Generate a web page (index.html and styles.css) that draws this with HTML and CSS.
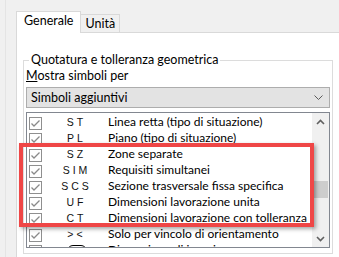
FILE: index.html
```html
<!DOCTYPE html>
<html lang="it">
<head>
<meta charset="utf-8">
<link rel="stylesheet" href="styles.css">
</head>
<body>
<div class="frame">
  <div class="tabs">
    <div class="tab active">Generale</div>
    <div class="tab">Unità</div>
  </div>
  <div class="panel">
    <fieldset class="group">
      <legend>Quotatura e tolleranza geometrica</legend>
      <div class="label"><span class="ul">M</span>ostra simboli per</div>
      <div class="select">
        <span>Simboli aggiuntivi</span>
        <svg class="chev" width="9" height="5" viewBox="0 0 9 5"><polyline points="0.5,0.5 4.5,4.5 8.5,0.5" fill="none" stroke="#5a5a5a" stroke-width="1"/></svg>
      </div>
      <div class="list">
        <div class="rows">
          <div class="row"><span class="cb"><svg width="11" height="11" viewBox="0 0 11 11"><polyline points="1.5,5.5 4,8 9.5,2.5" fill="none" stroke="#8a8a8a" stroke-width="1.3"/></svg></span><span class="sym">ST</span><span class="desc">Linea retta (tipo di situazione)</span></div>
          <div class="row"><span class="cb"><svg width="11" height="11" viewBox="0 0 11 11"><polyline points="1.5,5.5 4,8 9.5,2.5" fill="none" stroke="#8a8a8a" stroke-width="1.3"/></svg></span><span class="sym">PL</span><span class="desc">Piano (tipo di situazione)</span></div>
          <div class="row"><span class="cb"><svg width="11" height="11" viewBox="0 0 11 11"><polyline points="1.5,5.5 4,8 9.5,2.5" fill="none" stroke="#8a8a8a" stroke-width="1.3"/></svg></span><span class="sym">SZ</span><span class="desc">Zone separate</span></div>
          <div class="row"><span class="cb"><svg width="11" height="11" viewBox="0 0 11 11"><polyline points="1.5,5.5 4,8 9.5,2.5" fill="none" stroke="#8a8a8a" stroke-width="1.3"/></svg></span><span class="sym">SIM</span><span class="desc">Requisiti simultanei</span></div>
          <div class="row"><span class="cb"><svg width="11" height="11" viewBox="0 0 11 11"><polyline points="1.5,5.5 4,8 9.5,2.5" fill="none" stroke="#8a8a8a" stroke-width="1.3"/></svg></span><span class="sym">SCS</span><span class="desc">Sezione trasversale fissa specifica</span></div>
          <div class="row"><span class="cb"><svg width="11" height="11" viewBox="0 0 11 11"><polyline points="1.5,5.5 4,8 9.5,2.5" fill="none" stroke="#8a8a8a" stroke-width="1.3"/></svg></span><span class="sym">UF</span><span class="desc">Dimensioni lavorazione unita</span></div>
          <div class="row"><span class="cb"><svg width="11" height="11" viewBox="0 0 11 11"><polyline points="1.5,5.5 4,8 9.5,2.5" fill="none" stroke="#8a8a8a" stroke-width="1.3"/></svg></span><span class="sym">CT</span><span class="desc">Dimensioni lavorazione con tolleranza</span></div>
          <div class="row"><span class="cb"><svg width="11" height="11" viewBox="0 0 11 11"><polyline points="1.5,5.5 4,8 9.5,2.5" fill="none" stroke="#8a8a8a" stroke-width="1.3"/></svg></span><span class="sym">&gt;&lt;</span><span class="desc">Solo per vincolo di orientamento</span></div>
          <div class="row"><span class="cb"></span><span class="sym"><svg width="20" height="12" viewBox="0 0 20 12"><rect x="0.5" y="0.5" width="19" height="11" rx="5.5" fill="none" stroke="#000" stroke-width="1"/></svg></span><span class="desc">Dimensione di ispezione</span></div>
        </div>
        <div class="scrollbar">
          <div class="sb-btn"><svg width="9" height="6" viewBox="0 0 9 6"><polyline points="1,5 4.5,1.5 8,5" fill="none" stroke="#606060" stroke-width="1.6"/></svg></div>
          <div class="sb-track"><div class="sb-thumb"></div></div>
          <div class="sb-btn"><svg width="9" height="6" viewBox="0 0 9 6"><polyline points="1,1 4.5,4.5 8,1" fill="none" stroke="#606060" stroke-width="1.6"/></svg></div>
        </div>
      </div>
    </fieldset>
    <div class="highlight"></div>
  </div>
</div>
</body>
</html>
```

FILE: styles.css
```css
html, body {
  margin: 0;
  padding: 0;
  background: #f0f0f0;
  overflow: hidden;
  height: 100%;
}
body {
  font-family: Lato, "Noto Sans", sans-serif;
  font-size: 12.5px;
  line-height: 16px;
  color: #000;
}
.frame {
  margin-left: 5px;
  border-left: 1px solid #e4e4e4;
  padding-left: 10px;
  padding-top: 11px;
  height: 100%;
  box-sizing: border-box;
}
.tabs {
  display: flex;
  align-items: flex-end;
  height: 21px;
}
.tab {
  box-sizing: border-box;
  height: 18px;
  padding: 1px 4px 0 4px;
  border: 1px solid #d9d9d9;
  border-bottom: none;
  border-left: none;
  background: #f0f0f0;
}
.tab.active {
  position: relative;
  z-index: 1;
  height: 22px;
  margin-bottom: -1px;
  padding: 1px 7px 0 7px;
  border-left: 1px solid #d9d9d9;
  background: #fff;
}
.panel {
  position: relative;
  background: #fff;
  border-top: 1px solid #d9d9d9;
  border-left: 1px solid #d9d9d9;
  height: 224px;
  padding-left: 6px;
  padding-top: 19px;
  overflow: hidden;
}
.group {
  box-sizing: border-box;
  width: 310px;
  margin: 0;
  padding: 0 2px 5px 2px;
  border: 1px solid #dcdcdc;
  min-width: 0;
}
.group legend {
  margin-left: 3px;
  padding: 0 2px;
  line-height: 16px;
}
.label {
  line-height: 16px;
  margin-bottom: 3px;
}
.ul {
  text-decoration: underline;
}
.select {
  box-sizing: border-box;
  height: 21px;
  border: 1px solid #adadad;
  background: #e3e3e3;
  display: flex;
  align-items: center;
  justify-content: space-between;
  padding: 0 6px 0 4px;
}
.chev {
  display: block;
}
.list {
  box-sizing: border-box;
  margin-top: 4px;
  height: 136px;
  border: 1px solid #828790;
  background: #fff;
  display: flex;
  overflow: hidden;
}
.rows {
  flex: 1;
  padding-top: 1px;
  overflow: hidden;
}
.row {
  display: flex;
  align-items: flex-start;
  height: 16px;
  white-space: nowrap;
}
.cb {
  box-sizing: border-box;
  width: 13px;
  height: 13px;
  margin: 3px 0 0 2px;
  border: 1px solid #8f8f8f;
  background: #fff;
  display: flex;
  flex: none;
}
.cb svg {
  display: block;
}
.sym {
  flex: none;
  width: 60px;
  margin-left: 3px;
  padding-left: 3px;
  box-sizing: border-box;
  text-align: center;
  font-family: "Liberation Sans", Arial, sans-serif;
  font-size: 10.5px;
  letter-spacing: 3px;
  color: #111;
}
.sym svg {
  display: inline-block;
  margin-top: 3px;
}
.desc {
  margin-left: 3px;
  font-size: 12px;
}
.scrollbar {
  flex: none;
  width: 17px;
  background: #f0f0f0;
  display: flex;
  flex-direction: column;
}
.sb-btn {
  height: 17px;
  display: flex;
  align-items: center;
  justify-content: center;
  flex: none;
}
.sb-track {
  flex: 1;
}
.sb-thumb {
  margin: 51px 1px 0 1px;
  height: 17px;
  background: #cdcdcd;
}
.highlight {
  position: absolute;
  left: 2px;
  top: 110px;
  width: 295px;
  height: 84px;
  box-sizing: border-box;
  border: 4px solid #ef4646;
  box-shadow: 2px 2px 4px rgba(0, 0, 0, 0.35);
}
```
